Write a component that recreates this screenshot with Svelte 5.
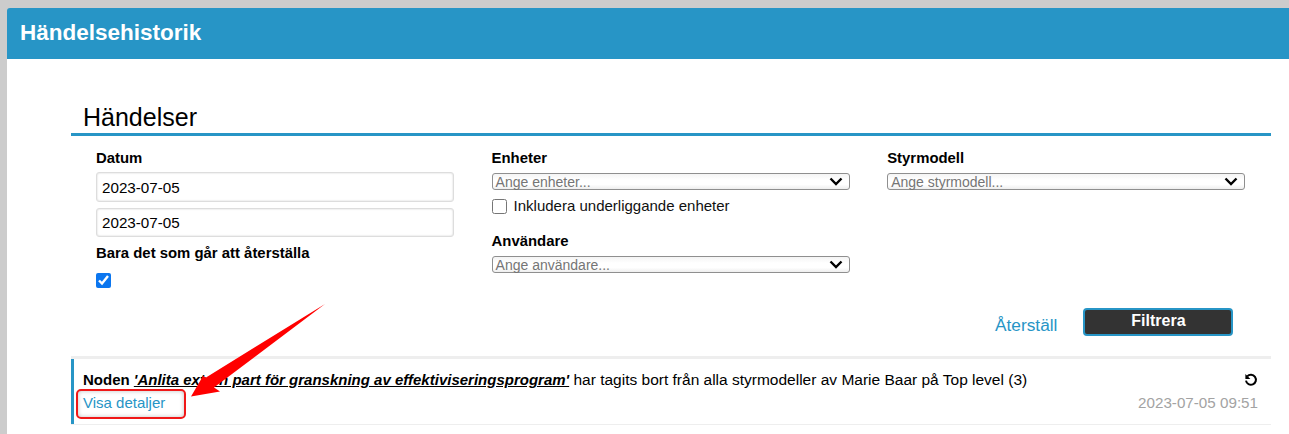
<script>
  const event = {
    node: "'Anlita extern part för granskning av effektiviseringsprogram'",
    rest: " har tagits bort från alla styrmodeller av Marie Baar på Top level (3)",
    time: "2023-07-05 09:51",
  };
</script>

<div class="page">
  <header class="topbar"><h1>Händelsehistorik</h1></header>

  <main class="content">
    <h2>Händelser</h2>

    <div class="filters">
      <div class="col">
        <span class="label">Datum</span>
        <input class="date first" type="text" value="2023-07-05" />
        <input class="date" type="text" value="2023-07-05" />
        <span class="label restore">Bara det som går att återställa</span>
        <input class="check checked-box" type="checkbox" checked />
      </div>

      <div class="col">
        <span class="label">Enheter</span>
        <div class="select">
          <span>Ange enheter...</span>
          <svg viewBox="0 0 14 9" width="14" height="9"><path d="M1.5 1.5 7 7l5.5-5.5" /></svg>
        </div>
        <label class="include">
          <input class="check" type="checkbox" />
          Inkludera underliggande enheter
        </label>
        <span class="label users">Användare</span>
        <div class="select">
          <span>Ange användare...</span>
          <svg viewBox="0 0 14 9" width="14" height="9"><path d="M1.5 1.5 7 7l5.5-5.5" /></svg>
        </div>
      </div>

      <div class="col">
        <span class="label">Styrmodell</span>
        <div class="select">
          <span>Ange styrmodell...</span>
          <svg viewBox="0 0 14 9" width="14" height="9"><path d="M1.5 1.5 7 7l5.5-5.5" /></svg>
        </div>
      </div>
    </div>

    <div class="actions">
      <a href="#reset" class="reset">Återställ</a>
      <button class="filter">Filtrera</button>
    </div>

    <article class="event">
      <div class="event-main">
        <p><b>Noden <i><u>{event.node}</u></i></b>{event.rest}</p>
        <a href="#details" class="details">Visa detaljer</a>
      </div>
      <div class="event-side">
        <svg class="undo" viewBox="0 0 14 14" width="14" height="14">
          <path d="M3.2 3.4A5 5 0 1 1 2 7.6" />
          <path class="head" d="M1.4 1v5h5z" />
        </svg>
        <span class="time">{event.time}</span>
      </div>
    </article>
  </main>

  <div class="callout"></div>
  <svg class="arrow" viewBox="0 0 1289 434" width="1289" height="434">
    <path d="M325 304 214 387.5 220 391.5 191 396.5 203 376 206 377.5z" fill="#ff0000" />
  </svg>
</div>

<style>
  :global(body) {
    margin: 0;
    background: #cccccc;
    font-family: "Liberation Sans", Arial, sans-serif;
  }

  .page {
    position: relative;
    height: 426px;
    padding: 8px 0 0 7px;
    overflow: hidden;
  }

  .topbar {
    height: 51px;
    background: #2795c6;
    display: flex;
    align-items: center;
    padding-left: 13px;
    border-top-left-radius: 3px;
  }

  h1 {
    margin: 0 0 2px;
    color: #fff;
    font-size: 22.5px;
    font-weight: bold;
  }

  .content {
    background: #fff;
    height: 375px;
    padding: 0 18px 0 64px;
    overflow: hidden;
  }

  h2 {
    margin: 44px 0 0;
    padding: 0 0 1px 12px;
    height: 29px;
    line-height: 29px;
    font-size: 25px;
    font-weight: normal;
    color: #000;
    border-bottom: 3px solid #2795c6;
  }

  .filters {
    display: grid;
    grid-template-columns: repeat(3, 358px);
    column-gap: 37.6px;
    padding: 13px 0 0 25px;
  }

  .col {
    display: flex;
    flex-direction: column;
    align-items: flex-start;
  }

  .label {
    font-size: 14.9px;
    font-weight: bold;
    line-height: 18px;
    color: #000;
  }

  .date {
    box-sizing: border-box;
    width: 358px;
    height: 29px;
    margin: 6px 0 0;
    padding: 0 5px;
    border: 1px solid #ddd;
    border-radius: 3px;
    box-shadow: inset 0 0 2px #ccc;
    font: 15.2px "Liberation Sans", Arial, sans-serif;
    color: #000;
  }

  .date.first {
    height: 30px;
    margin-top: 5px;
  }

  .restore {
    margin-top: 7px;
  }

  .check {
    width: 13px;
    height: 13px;
    margin: 0;
    accent-color: #0b76ef;
  }

  .checked-box {
    width: 15px;
    height: 15px;
    margin-top: 11px;
  }

  .select {
    box-sizing: border-box;
    width: 358px;
    height: 17px;
    margin-top: 6px;
    padding: 0 6px 0 3px;
    display: flex;
    align-items: center;
    justify-content: space-between;
    border: 1px solid #8f8f8f;
    border-radius: 3px;
    background: linear-gradient(#f4f4f4, #fff 40%, #fff 70%, #eee);
    font-size: 14px;
    color: #757575;
  }

  .select path {
    fill: none;
    stroke: #000;
    stroke-width: 2.4;
  }

  .include {
    display: flex;
    align-items: center;
    gap: 7px;
    margin-top: 7px;
    font-size: 15px;
    line-height: 18px;
    color: #111;
  }

  .include .check {
    width: 15px;
    height: 15px;
  }

  .users {
    margin-top: 17px;
  }

  .actions {
    position: absolute;
    top: 308px;
    left: 995px;
    display: flex;
    align-items: flex-start;
    gap: 26px;
  }

  .reset {
    margin-top: 8px;
    font-size: 17.3px;
    line-height: 18px;
    color: #2795c6;
    text-decoration: none;
  }

  .filter {
    width: 150px;
    height: 28px;
    padding: 0 0 2px;
    background: #333;
    border: 2px solid #2795c6;
    border-radius: 4px;
    color: #fff;
    font: bold 16px "Liberation Sans", Arial, sans-serif;
  }

  .event {
    position: absolute;
    top: 356px;
    left: 71px;
    width: 1200px;
    height: 69px;
    box-sizing: border-box;
    display: flex;
    justify-content: space-between;
    border-top: 3px solid #eee;
    border-bottom: 1px solid #eee;
    padding: 11px 13px 0 12px;
    background: linear-gradient(90deg, #2795c6 3px, #fff 3px);
  }

  .event p {
    margin: 0;
    font-size: 15.5px;
    line-height: 20px;
    color: #000;
  }

  .event b {
    font-size: 15px;
  }

  .details {
    display: block;
    margin-top: 3px;
    font-size: 15px;
    line-height: 20px;
    color: #2795c6;
    text-decoration: none;
  }

  .event-side {
    display: flex;
    flex-direction: column;
    align-items: flex-end;
  }

  .undo {
    margin-top: 3px;
  }

  .undo path {
    fill: none;
    stroke: #000;
    stroke-width: 2;
  }

  .undo .head {
    fill: #000;
    stroke: none;
  }

  .time {
    margin-top: 7px;
    font-size: 15.2px;
    line-height: 18px;
    color: #a3a3a3;
  }

  /* annotation drawn on top of the screenshot */
  .callout {
    position: absolute;
    left: 76px;
    top: 389px;
    width: 106px;
    height: 26px;
    border: 2px solid #f01818;
    border-radius: 5px;
    box-shadow: inset 0 0 4px rgba(0, 0, 0, 0.25);
  }

  .arrow {
    position: absolute;
    left: 0;
    top: 0;
    pointer-events: none;
  }
</style>
